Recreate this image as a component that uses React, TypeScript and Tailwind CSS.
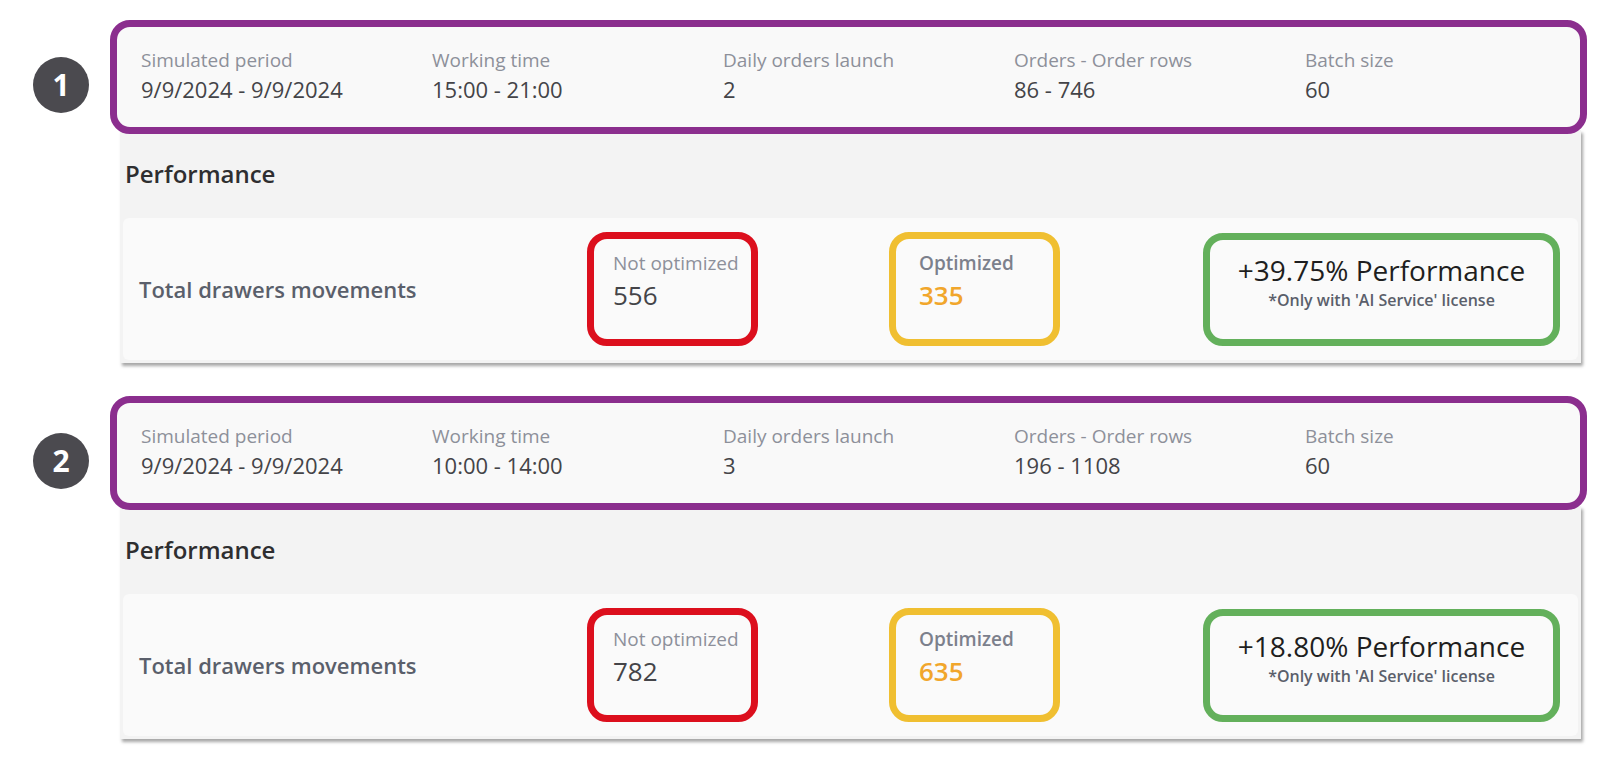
const runs = [
  {
    n: 1,
    period: '9/9/2024 - 9/9/2024',
    working: '15:00 - 21:00',
    launch: '2',
    orders: '86 - 746',
    batch: '60',
    notOpt: '556',
    opt: '335',
    perf: '+39.75% Performance',
  },
  {
    n: 2,
    period: '9/9/2024 - 9/9/2024',
    working: '10:00 - 14:00',
    launch: '3',
    orders: '196 - 1108',
    batch: '60',
    notOpt: '782',
    opt: '635',
    perf: '+18.80% Performance',
  },
]

type Run = (typeof runs)[number]

function Info({ label, value }: { label: string; value: string }) {
  return (
    <div className="w-[291px] shrink-0">
      <p className="text-[19px] leading-[26px] text-[#8d909a]">{label}</p>
      <p className="mt-[1px] text-[22px] leading-[30px] text-[#444448]">{value}</p>
    </div>
  )
}

function Section({ run }: { run: Run }) {
  return (
    <div className="flex items-start">
      {/* Step badge */}
      <div className="w-[110px] shrink-0 pl-[33px] pt-[37px]">
        <div className="w-[56px] h-[56px] rounded-full bg-[#4b4a4f] flex items-center justify-center text-white text-[30px] font-bold leading-none">
          {run.n}
        </div>
      </div>

      <div className="w-[1477px] shrink-0">
        {/* Simulation parameters */}
        <div className="relative z-10 border-[7px] border-[#8b2e8e] rounded-[20px] bg-[#f9f9f9] pl-[24px] pt-[20px] pb-[23px] flex">
          <Info label="Simulated period" value={run.period} />
          <Info label="Working time" value={run.working} />
          <Info label="Daily orders launch" value={run.launch} />
          <Info label="Orders - Order rows" value={run.orders} />
          <Info label="Batch size" value={run.batch} />
        </div>

        {/* Performance */}
        <div className="ml-[10px] mr-[6px] -mt-[4px] bg-[#f3f3f3] pt-[28px] pb-[3px] px-[3px] shadow-[2px_3px_3px_rgba(0,0,0,0.35)]">
          <h2 className="pl-[2px] text-[24px] leading-[32px] font-semibold text-[#2e2e30]">Performance</h2>
          <div className="mt-[28px] bg-[#fafafa] rounded-[6px] h-[142px] flex items-center pl-[16px] pr-[18px]">
            <div className="w-[448px] shrink-0 text-[22px] font-semibold text-[#5a5f6b]">
              Total drawers movements
            </div>
            <div className="w-[171px] h-[114px] shrink-0 border-[7px] border-[#dc0f1d] rounded-[20px] pl-[19px] pt-[12px]">
              <p className="text-[19px] leading-[24px] text-[#8d909a]">Not optimized</p>
              <p className="mt-[4px] text-[26px] leading-[32px] text-[#444448]">{run.notOpt}</p>
            </div>
            <div className="w-[171px] h-[114px] shrink-0 ml-[131px] border-[7px] border-[#f0bf31] rounded-[20px] pl-[23px] pt-[12px]">
              <p className="text-[19px] leading-[24px] font-semibold text-[#7c808c]">Optimized</p>
              <p className="mt-[4px] text-[26px] leading-[32px] font-semibold text-[#f1a62b]">{run.opt}</p>
            </div>
            <div className="w-[357px] h-[113px] shrink-0 ml-auto border-[7px] border-[#63b05b] rounded-[20px] flex flex-col items-center pt-[12px]">
              <p className="text-[28px] leading-[36px] font-medium text-[#1e1e20]">{run.perf}</p>
              <p className="mt-[2px] text-[16px] leading-[20px] font-semibold text-[#5a5f6b]">
                *Only with 'AI Service' license
              </p>
            </div>
          </div>
        </div>
      </div>
    </div>
  )
}

export default function App() {
  return (
    <div className="w-[1600px] h-[767px] bg-white pt-[20px] font-['Open_Sans',sans-serif] overflow-hidden">
      <div className="flex flex-col gap-[33px]">
        {runs.map((r) => (
          <Section key={r.n} run={r} />
        ))}
      </div>
    </div>
  )
}
